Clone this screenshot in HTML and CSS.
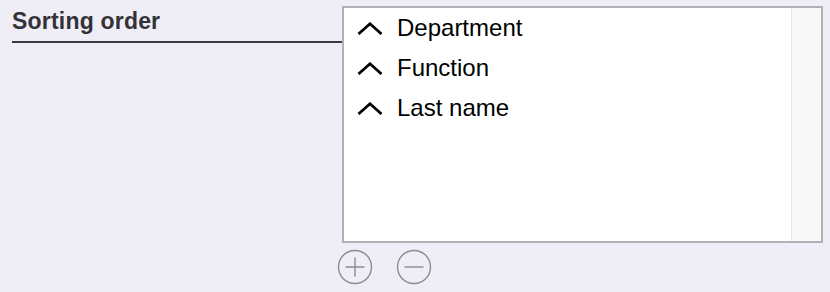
FILE: index.html
```html
<!DOCTYPE html>
<html lang="en">
  <head>
    <meta charset="UTF-8" />
    <title>Sorting order</title>
    <link rel="stylesheet" href="styles.css">
  </head>
  <body>
    <div class="field">
      <div class="field-label">Sorting order</div>
      <div class="field-body">
        <div class="list-box">
          <ul class="sort-list">
            <li class="sort-item">
              <svg class="chevron" width="26" height="13" viewBox="0 0 26 13"><path d="M1.5 12 L13 1.8 L24.5 12" fill="none" stroke="#000" stroke-width="2.8"/></svg>
              Department
            </li>
            <li class="sort-item">
              <svg class="chevron" width="26" height="13" viewBox="0 0 26 13"><path d="M1.5 12 L13 1.8 L24.5 12" fill="none" stroke="#000" stroke-width="2.8"/></svg>
              Function
            </li>
            <li class="sort-item">
              <svg class="chevron" width="26" height="13" viewBox="0 0 26 13"><path d="M1.5 12 L13 1.8 L24.5 12" fill="none" stroke="#000" stroke-width="2.8"/></svg>
              Last name
            </li>
          </ul>
          <div class="scroll-track"></div>
        </div>
        <div class="list-actions">
          <button class="round-btn" title="Add">
            <svg width="36" height="36" viewBox="0 0 36 36"><circle cx="18" cy="18" r="16.5" fill="none" stroke="#8c8c8e" stroke-width="1.4"/><path d="M18 8.5 V27.5 M8.5 18 H27.5" stroke="#8c8c8e" stroke-width="1.4"/></svg>
          </button>
          <button class="round-btn" title="Remove">
            <svg width="36" height="36" viewBox="0 0 36 36"><circle cx="18" cy="18" r="16.5" fill="none" stroke="#8c8c8e" stroke-width="1.4"/><path d="M8.5 18 H27.5" stroke="#8c8c8e" stroke-width="1.4"/></svg>
          </button>
        </div>
      </div>
    </div>
  </body>
</html>
```

FILE: styles.css
```css
body {
  margin: 0;
  background: #efedf6;
  font-family: 'Liberation Sans', Arial, sans-serif;
  color: #000;
}
.field {
  display: flex;
  align-items: flex-start;
  padding: 6px 7px 0 12px;
}
.field-label {
  width: 330px;
  margin-top: 2px;
  padding-bottom: 6px;
  border-bottom: 2px solid #3a393e;
  font-size: 23px;
  font-weight: bold;
  color: #333236;
  letter-spacing: 0.2px;
}
.field-body {
  flex: 1;
}
.list-box {
  display: flex;
  height: 233px;
  background: #fff;
  border: 2px solid #b1b0b5;
}
.sort-list {
  flex: 1;
  list-style: none;
  margin: 0;
  padding: 0;
}
.sort-item {
  display: flex;
  align-items: center;
  height: 40px;
  padding-left: 13px;
  font-size: 24px;
  gap: 14px;
}
.chevron {
  flex: none;
  margin-top: 1px;
}
.scroll-track {
  width: 29px;
  background: #f8f8f8;
  border-left: 1px solid #e6e6e6;
}
.list-actions {
  display: flex;
  gap: 23px;
  padding-top: 6px;
  margin-left: -5px;
}
.round-btn {
  padding: 0;
  border: none;
  background: none;
  width: 36px;
  height: 36px;
  cursor: pointer;
}
.round-btn svg {
  display: block;
}
```
